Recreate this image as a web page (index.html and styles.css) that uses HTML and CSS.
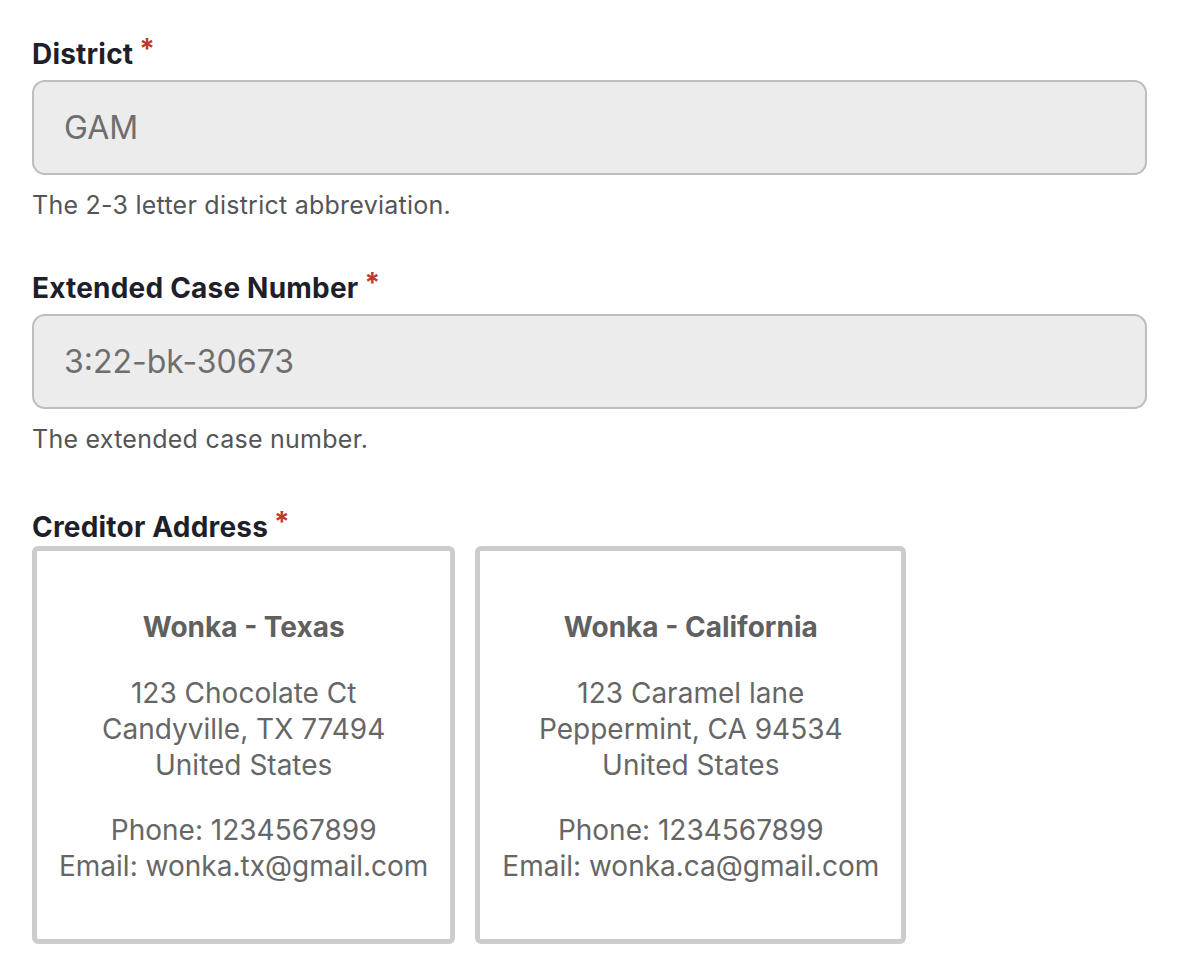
FILE: index.html
```html
<!DOCTYPE html>
<html>
<head>
<meta charset="utf-8">
<link rel="stylesheet" href="styles.css">
</head>
<body>
<div class="form">
  <div class="field">
    <label class="label">District<span class="req">*</span></label>
    <div class="input">GAM</div>
    <div class="help">The 2-3 letter district abbreviation.</div>
  </div>
  <div class="field">
    <label class="label">Extended Case Number<span class="req">*</span></label>
    <div class="input">3:22-bk-30673</div>
    <div class="help">The extended case number.</div>
  </div>
  <div class="field field-last">
    <label class="label label-tight">Creditor Address<span class="req">*</span></label>
    <div class="cards">
      <div class="card">
        <p class="card-title">Wonka - Texas</p>
        <p class="card-addr">123 Chocolate Ct<br>Candyville, TX 77494<br>United States</p>
        <p class="card-contact">Phone: 1234567899<br>Email: wonka.tx@gmail.com</p>
      </div>
      <div class="card">
        <p class="card-title">Wonka - California</p>
        <p class="card-addr">123 Caramel lane<br>Peppermint, CA 94534<br>United States</p>
        <p class="card-contact">Phone: 1234567899<br>Email: wonka.ca@gmail.com</p>
      </div>
    </div>
  </div>
</div>
</body>
</html>
```

FILE: styles.css
```css
* { box-sizing: border-box; }
html, body { margin: 0; padding: 0; background: #ffffff; }
body {
  font-family: Inter, "Noto Sans", "Liberation Sans", sans-serif;
  color: #1e1f2b;
}
.form {
  padding: 37px 0 0 32px;
  width: 1147px;
}
.field { margin-bottom: 48px; }
.label {
  display: block;
  font-size: 28px;
  line-height: 34px;
  font-weight: 700;
  color: #1e1f2b;
  letter-spacing: 0.2px;
}
.req {
  color: #c0392b;
  font-size: 28px;
  position: relative;
  top: -5px;
  margin-left: 6px;
  line-height: 0;
}
.input {
  margin-top: 9px;
  height: 95px;
  border: 2px solid #bdbdbd;
  border-radius: 13px;
  background: #ececec;
  color: #6e6e6e;
  font-size: 32px;
  line-height: 91px;
  padding-left: 30px;
}
.help {
  margin-top: 12px;
  font-size: 25px;
  line-height: 36px;
  letter-spacing: 0.25px;
  color: #555555;
}
.field-last { margin-top: 55px; }
.label-tight { line-height: 30px; margin-bottom: 4px; }
.cards {
  display: flex;
  gap: 20px;
  align-items: flex-start;
}
.card {
  border: 5px solid #cccccc;
  border-radius: 6px;
  padding: 58px 22px 55px;
  text-align: center;
  color: #666666;
  font-size: 28px;
  line-height: 36px;
}
.card p { margin: 0; }
.card-title { font-weight: 700; color: #606060; margin-bottom: 30px !important; }
.card-addr { margin-bottom: 29px !important; }
```
